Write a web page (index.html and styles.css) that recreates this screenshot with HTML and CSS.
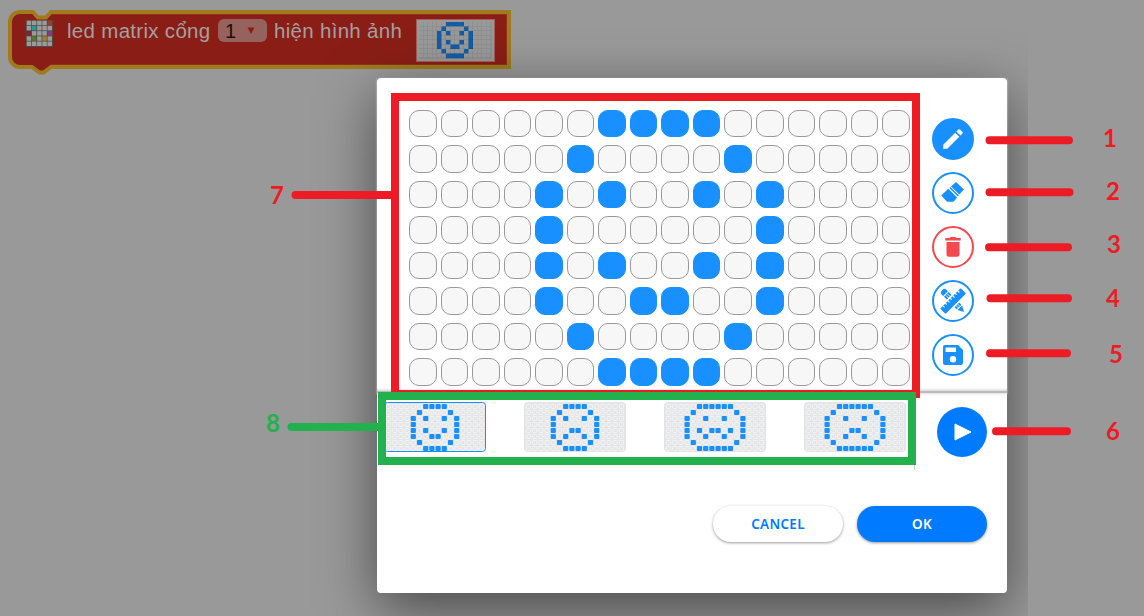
FILE: index.html
```html
<!DOCTYPE html>
<html lang="vi">
<head>
<meta charset="utf-8">
<title>Led matrix</title>
<link rel="stylesheet" href="styles.css">
</head>
<body>
<div class="stage">
  <div class="block">
    <svg class="block-shape" width="520" height="80" viewBox="0 0 520 80">
      <path d="M20 12H33L38 17.500H46L51 12H509V67H51L43.500 72.500H39.500L32 67H20A10 10 0 0 1 10 57V22A10 10 0 0 1 20 12Z" fill="#8a1e16" stroke="#9f7b1d" stroke-width="4"/>
      <path d="M51 14.500H506.500V64.500H51" fill="none" stroke="#92301c"/>
    </svg>
    <svg class="block-icon" width="27" height="27" viewBox="0 0 27 27">
      <rect width="27" height="27" fill="#4c4946"/>
      <g id="mini"></g>
    </svg>
    <span class="label first">led matrix cổng</span>
    <span class="select"><span>1</span><svg width="8" height="8" viewBox="0 0 8 8"><path d="M0.500 0.500H7.500L4 7Z" fill="#8a1e16"/></svg></span>
    <span class="label second">hiện hình ảnh</span>
    <svg class="preview" width="79" height="43" viewBox="0 0 79 43" id="preview"></svg>
  </div>

  <div class="dialog">
    <div class="editor">
      <div class="matrix" id="matrix"></div>
      <div class="tools">
        <button class="tool active"><svg width="26" height="26" viewBox="0 0 24 24"><path d="M3 17.250V21h3.750L17.810 9.940l-3.750-3.750L3 17.250zM20.710 7.040a1 1 0 0 0 0-1.410l-2.340-2.340a1 1 0 0 0-1.410 0l-1.830 1.830 3.750 3.750 1.830-1.830z" fill="#fff"/></svg></button>
        <button class="tool"><svg width="26" height="26" viewBox="0 0 26 26" fill="#1890ff"><path d="M16 2L24 9.500L19.300 14.600L11 6.500Z"/><path d="M10.300 7.100L18.800 15.300L17.900 16.400L9.300 8Z"/><path d="M8.300 8.700L17.100 17.500L13.500 21.800H7L1.300 15.500Z"/></svg></button>
        <button class="tool danger"><svg width="26" height="26" viewBox="0 0 26 26"><path d="M6.500 8H19.500V20.500Q19.500 22.800 17.500 22.800H8.500Q6.500 22.800 6.500 20.500ZM5.300 4.100H9.500L10.500 3H15.500L16.500 4.100H20.700V6.500H5.300Z" fill="#f5484f"/></svg></button>
        <button class="tool"><svg width="26" height="26" viewBox="0 0 26 26"><g transform="rotate(45 13 13)" fill="#1890ff"><path d="M2.500 9.700V16.300H0Q-2.300 16.300-2.300 13T0 9.700Z"/><path d="M3.600 9.700H7.500V16.300H3.600ZM18.500 9.700H21.500V16.300H18.500ZM22.500 9.700L28.500 13L22.500 16.300Z"/><path d="M4 11.900H22M4 14.100H22" stroke="#fff" stroke-width=".8"/></g><g transform="rotate(-45 13 13)"><rect x="-2" y="8" width="30" height="10" fill="#fff"/><rect x="-1.500" y="9.300" width="29" height="7.600" rx="1" fill="#1890ff"/><path d="M2.500 9V11.500M6 9V11M9.500 9V11.500M13 9V11M16.500 9V11.500M20 9V11M23.500 9V11.500" stroke="#fff" stroke-width="1.200"/></g></svg></button>
        <button class="tool"><svg width="26" height="26" viewBox="0 0 26 26"><path d="M5 3H18L23 8V21Q23 23 21 23H5Q3 23 3 21V5Q3 3 5 3Z" fill="#1890ff"/><path d="M5.500 5.500H16V10H5.500Z" fill="#fff"/><circle cx="13" cy="17.200" r="3.200" fill="#fff"/></svg></button>
      </div>
    </div>
    <div class="library">
      <div class="thumbs" id="thumbs"></div>
      <button class="play"><svg width="18" height="18" viewBox="0 0 18 18"><path d="M1 1L17 9L1 17Z" fill="#fff" stroke="#fff" stroke-linejoin="round"/></svg></button>
    </div>
    <div class="actions">
      <button class="btn">CANCEL</button>
      <button class="btn primary">OK</button>
    </div>
  </div>
</div>

<svg class="notes" width="1144" height="616" viewBox="0 0 1144 616">
  <g fill="none" stroke="#ed1c24" stroke-width="8">
    <rect x="395" y="97" width="521" height="297"/>
    <g stroke-linecap="round">
      <path d="M295.500 195H395M989.500 140.300H1069M989.500 192.300H1069.500M989 247.200H1068M990.500 298.200H1068M990 353.200H1067M996 431.200H1067"/>
    </g>
  </g>
  <g fill="none" stroke="#22b14c" stroke-width="8">
    <rect x="382" y="396" width="530" height="65"/>
    <path d="M291.500 427H380" stroke-linecap="round"/>
  </g>
  <g class="digits">
    <text x="1103" y="147">1</text>
    <text x="1106" y="200">2</text>
    <text x="1107" y="253">3</text>
    <text x="1106" y="307">4</text>
    <text x="1109" y="363">5</text>
    <text x="1106" y="440">6</text>
    <text x="270" y="204">7</text>
    <text class="green" x="266" y="432">8</text>
  </g>
</svg>
<script src="matrix.js"></script>
</body>
</html>
```
FILE: styles.css
```css
* { box-sizing: border-box; }

body {
  margin: 0;
  width: 1144px;
  height: 616px;
  overflow: hidden;
  background: #999;
  font-family: "Open Sans", "Noto Sans", sans-serif;
}

button { padding: 0; border: 0; font: inherit; }

.stage {
  width: 1028px;
  height: 616px;
  overflow: hidden;
}

.block {
  position: relative;
  display: flex;
  align-items: flex-start;
  height: 78px;
  padding: 18px 0 0 26px;
  color: #a3a09f;
  font: 20px/26px "Liberation Sans", Arial, sans-serif;
}

.block-shape { position: absolute; left: 0; top: 0; }
.block-icon { position: relative; margin-top: 2px; }

.label {
  position: relative;
  font-size: 20.5px;
  letter-spacing: .3px;
  white-space: nowrap;
}

.label.first { width: 151px; margin-left: 14px; }
.label.second { width: 142px; margin-left: 7px; }

.select {
  position: relative;
  display: flex;
  align-items: center;
  justify-content: space-between;
  width: 49px;
  height: 23px;
  margin-top: 1px;
  padding: 0 12px 0 7px;
  border-radius: 6px;
  background: #96625e;
  color: #16100f;
}

.preview { position: relative; margin-top: 1px; }

.dialog {
  position: relative;
  width: 630px;
  height: 515px;
  margin-left: 377px;
  border-radius: 4px;
  background: #fff;
  box-shadow: 0 16px 56px rgba(0, 0, 0, .52);
}

.editor {
  display: flex;
  justify-content: space-between;
  height: 315px;
  padding: 31.6px 33px 0 32px;
  border-bottom: 2px solid #bbb;
  box-shadow: 0 1px 2px #ddd, inset 0 -3px 3px -2px #ccc;
}

.matrix {
  display: grid;
  grid-template-columns: repeat(16, 27.5px);
  grid-auto-rows: 27.5px;
  column-gap: 4.050px;
  row-gap: 8px;
  align-content: start;
}

.led {
  border: 1px solid #999;
  border-radius: 10px;
  background: #f7f7f7;
}

.led.on { border-color: #1890ff; background: #1890ff; }

.tools {
  display: flex;
  flex-direction: column;
  gap: 12px;
  padding-top: 8.400px;
}

.tool {
  display: flex;
  align-items: center;
  justify-content: center;
  width: 42px;
  height: 42px;
  border: 2px solid #1890ff;
  border-radius: 50%;
  background: #fff;
}

.tool.active { background: #1890ff; }
.tool.danger { border-color: #f5484f; }

.library {
  display: flex;
  justify-content: space-between;
  height: 77px;
  padding-right: 20px;
}

.thumbs {
  display: flex;
  gap: 38px;
  width: 538px;
  padding: 9px 0 0 7px;
  border-right: 1px solid #ccc;
}

.thumb { flex: none; }

.play {
  display: flex;
  align-items: center;
  justify-content: center;
  width: 50px;
  height: 50px;
  margin-top: 14px;
  padding-left: 1px;
  border-radius: 50%;
  background: #007bff;
}

.actions {
  display: flex;
  justify-content: flex-end;
  gap: 14px;
  padding: 36px 20px 0 0;
}

.btn {
  width: 130px;
  height: 36px;
  border-radius: 18px;
  background: #fff;
  box-shadow: 0 1px 3px rgba(0, 0, 0, .4);
  color: #007bff;
  font-family: "Noto Sans", "Open Sans", sans-serif;
  font-size: 13.5px;
  font-weight: 600;
  letter-spacing: .3px;
}

.btn.primary { background: #007bff; color: #fff; }

.notes { position: absolute; left: 0; top: 0; }

.digits {
  fill: #ed1c24;
  font: 700 24px Lato, "Open Sans", sans-serif;
}

.digits .green { fill: #22b14c; }
```
FILE: matrix.js
```js
const faces = [
  [[6, 7, 8, 9], [5, 10], [4, 6, 9, 11], [4, 11], [4, 6, 9, 11], [4, 7, 8, 11], [5, 10], [6, 7, 8, 9]],
  [[6, 7, 8, 9], [5, 10], [4, 6, 9, 11], [4, 11], [4, 7, 8, 11], [4, 6, 9, 11], [5, 10], [6, 7, 8, 9]],
  [[5, 6, 7, 8, 9, 10], [4, 11], [3, 6, 9, 12], [3, 12], [3, 5, 7, 8, 10, 12], [3, 6, 9, 12], [4, 11], [5, 6, 7, 8, 9, 10]],
  [[5, 6, 7, 8, 9, 10], [4, 11], [3, 6, 9, 12], [3, 12], [3, 7, 8, 12], [3, 6, 9, 12], [4, 11], [5, 6, 7, 8, 9, 10]]
];

// Calls draw(row, column, lit) for all 16x8 LEDs and joins the markup.
function cells(face, draw) {
  let out = '';
  for (let r = 0; r < 8; r++) {
    for (let c = 0; c < 16; c++) out += draw(r, c, face[r].includes(c));
  }
  return out;
}

document.getElementById('matrix').innerHTML = cells(faces[0], (r, c, on) =>
  `<div class="led${on ? ' on' : ''}"></div>`);

document.getElementById('thumbs').innerHTML = faces.map((face, i) =>
  `<svg class="thumb" width="102" height="50" viewBox="0 0 102 50">
    <rect x=".5" y=".5" width="101" height="49" rx="3" fill="#e4e6e9" stroke="${i ? '#e1e4e8' : '#1890ff'}"/>` +
  cells(face, (r, c, on) => {
    const x = 4.5 + c * 6.2, y = 4.5 + r * 6;
    return on
      ? `<rect x="${x - 2.6}" y="${y - 2.5}" width="5.2" height="5" rx="1" fill="#1890ff"/>`
      : `<rect x="${x - 2.1}" y="${y - 2}" width="4.200" height="4" rx="1" fill="#e6e6e6" stroke="#f4f4f4" stroke-width="1"/>`;
  }) + '</svg>').join('');

document.getElementById('preview').innerHTML =
  '<rect x=".5" y=".5" width="78" height="42" fill="#999" stroke="#a65d56"/>' +
  cells(faces[0], (r, c, on) =>
    `<rect x="${3 + c * 4.5}" y="${3 + r * 4.5}" width="4.500" height="4.500" fill="${on ? '#135da6' : '#999'}"/>` +
    `<path d="M${3 + c * 4.5} ${7.5 + r * 4.5}h4.500v-4.500" fill="none" stroke="${on ? '#0f5292' : '#828282'}" stroke-width=".7"/>`);

const colors = { '4,0': '#a1382c', '1,1': '#2a979d', '0,2': '#7f2236', '4,2': '#873a80', '1,3': '#557b27', '3,3': '#a1812b' };
let mini = '';
for (let r = 0; r < 5; r++) {
  for (let c = 0; c < 5; c++) {
    mini += `<rect x="${0.7 + c * 5.2}" y="${0.7 + r * 5.2}" width="4.500" height="4.500" fill="${colors[c + ',' + r] || '#9b9b9b'}"/>`;
  }
}
document.getElementById('mini').innerHTML = mini;
```
